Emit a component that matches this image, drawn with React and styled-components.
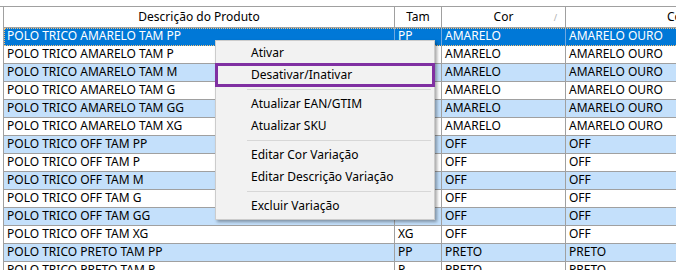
import React from "react";
import styled, { createGlobalStyle } from "styled-components";

const Global = createGlobalStyle`
  html, body { margin: 0; padding: 0; background: #fff; }
  body { font-family: "Noto Sans", "Segoe UI", sans-serif; font-size: 12px; color: #000; }
`;

const GRID = "#a0a0a0";
const COLS = "391px 47px 124px 274px";

const Page = styled.div`
  position: relative;
  width: 676px;
  height: 270px;
  overflow: hidden;
  background: #fff;
  padding-top: 6px;
  box-sizing: border-box;
`;

const Table = styled.div`
  border-top: 1px solid ${GRID};
  padding-left: 3px;
`;

const Body = styled.div`
  border-left: 1px solid ${GRID};
  width: max-content;
`;

const HeaderRow = styled.div`
  display: grid;
  grid-template-columns: ${COLS};
  height: 21px;
`;

const HeaderCell = styled.div`
  position: relative;
  display: flex;
  align-items: center;
  justify-content: center;
  box-sizing: border-box;
  border-right: 1px solid ${GRID};
  border-bottom: 1px solid ${GRID};
  white-space: nowrap;
  overflow: hidden;
  line-height: 1;
  padding-bottom: 1px;
`;

const SortMark = styled.span`
  position: absolute;
  right: 8px;
  top: 6px;
  font-size: 9px;
  color: #b0b0b0;
`;

const Row = styled.div`
  display: grid;
  grid-template-columns: ${COLS};
  height: 18px;
  background: ${(p) => (p.$selected ? "#0078d7" : p.$alt ? "#c4e0fb" : "#fff")};
  color: ${(p) => (p.$selected ? "#fff" : "#000")};
  ${(p) => p.$selected && "outline: 1px dotted #f5c27a; outline-offset: -1px;"}
`;

const Cell = styled.div`
  box-sizing: border-box;
  display: flex;
  align-items: center;
  padding: 0 0 1px 3px;
  border-right: 1px solid ${(p) => (p.$selected ? "#6fa8e0" : GRID)};
  border-bottom: 1px solid ${(p) => (p.$selected ? "#0078d7" : GRID)};
  white-space: nowrap;
  overflow: hidden;
  line-height: 1;
`;

const Menu = styled.div`
  position: absolute;
  left: 215px;
  top: 40px;
  width: 220px;
  box-sizing: border-box;
  background: #f2f2f2;
  border: 1px solid #cccccc;
  box-shadow: 2px 2px 3px rgba(0, 0, 0, 0.35);
  padding: 1px 2px 2px 2px;
  display: flex;
  flex-direction: column;
`;

const MenuItem = styled.div`
  height: 22px;
  display: flex;
  align-items: center;
  padding-left: 33px;
  padding-bottom: 1px;
  box-sizing: border-box;
  white-space: nowrap;
  color: #000;
`;

const Separator = styled.div`
  height: 7px;
  display: flex;
  align-items: center;
  padding-left: 29px;
  padding-right: 1px;
  &::after {
    content: "";
    flex: 1;
    height: 1px;
    background: #d7d7d7;
  }
`;

const Highlight = styled.div`
  position: absolute;
  left: 215px;
  top: 63px;
  width: 220px;
  height: 24px;
  box-sizing: border-box;
  border: 3px solid #8030a2;
  pointer-events: none;
`;

const sizes = ["PP", "P", "M", "G", "GG", "XG"];
const rows = [];
[["AMARELO", "AMARELO OURO"], ["OFF", "OFF"], ["PRETO", "PRETO"]].forEach(([cor, cor2]) => {
  sizes.forEach((s) => {
    rows.push({ desc: `POLO TRICO ${cor} TAM ${s}`, tam: s, cor, cor2 });
  });
});

export default function App() {
  return (
    <>
      <Global />
      <Page>
        <Table>
          <Body>
            <HeaderRow>
              <HeaderCell>Descrição do Produto</HeaderCell>
              <HeaderCell>Tam</HeaderCell>
              <HeaderCell>
                Cor
                <SortMark>/</SortMark>
              </HeaderCell>
              <HeaderCell>Cor Variação</HeaderCell>
            </HeaderRow>
            {rows.slice(0, 14).map((r, i) => (
              <Row key={i} $selected={i === 0} $alt={i % 2 === 0}>
                <Cell $selected={i === 0}>{r.desc}</Cell>
                <Cell $selected={i === 0}>{r.tam}</Cell>
                <Cell $selected={i === 0}>{r.cor}</Cell>
                <Cell $selected={i === 0}>{r.cor2}</Cell>
              </Row>
            ))}
          </Body>
        </Table>
        <Menu>
          <MenuItem>Ativar</MenuItem>
          <MenuItem>Desativar/Inativar</MenuItem>
          <Separator />
          <MenuItem>Atualizar EAN/GTIM</MenuItem>
          <MenuItem>Atualizar SKU</MenuItem>
          <Separator />
          <MenuItem>Editar Cor Variação</MenuItem>
          <MenuItem>Editar Descrição Variação</MenuItem>
          <Separator />
          <MenuItem>Excluir Variação</MenuItem>
        </Menu>
        <Highlight />
      </Page>
    </>
  );
}
